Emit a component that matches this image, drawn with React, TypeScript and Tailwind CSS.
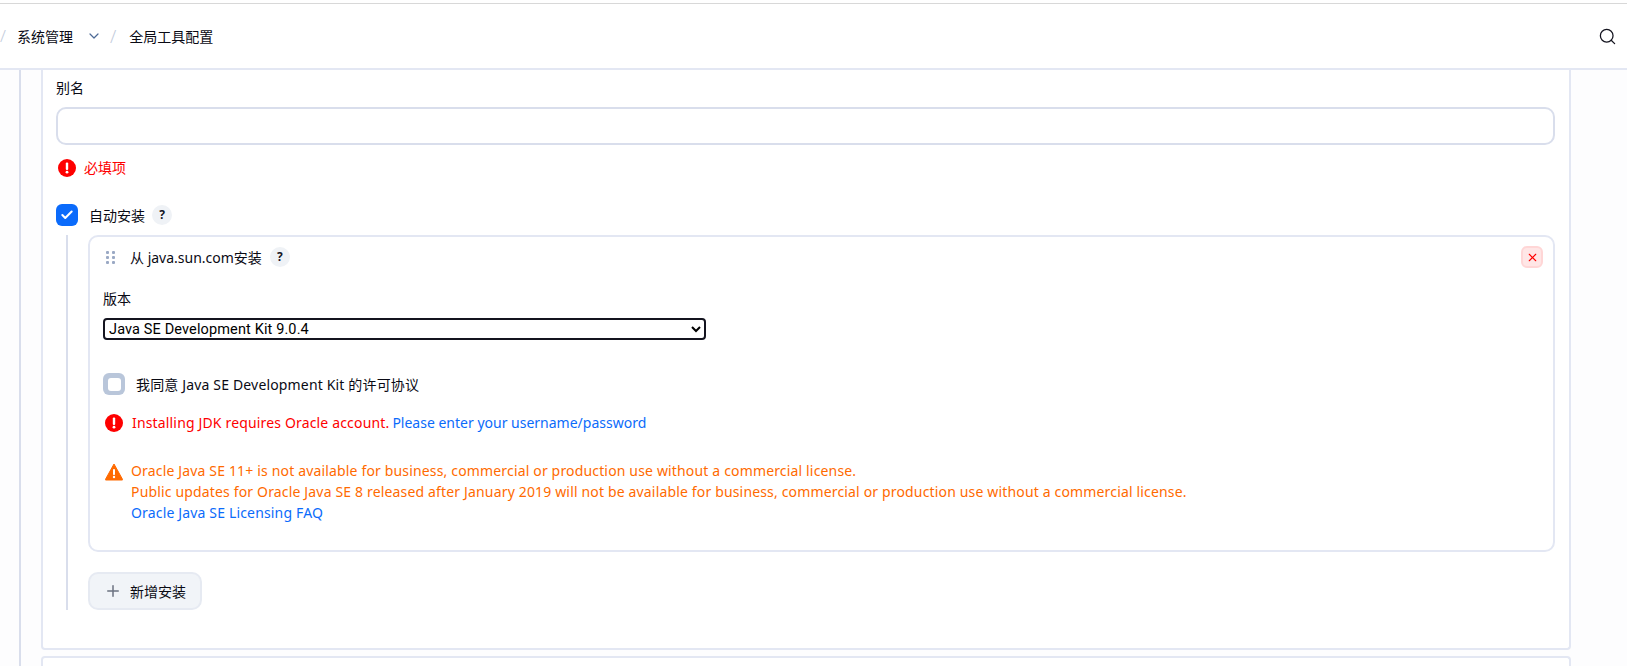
import { ChevronDown, Plus, Search, X, Check } from "lucide-react";

const font = "font-['Noto_Sans','Noto_Sans_CJK_SC',sans-serif]";

function ErrorIcon() {
  return (
    <svg viewBox="0 0 18 18" className="h-[18px] w-[18px] shrink-0">
      <circle cx="9" cy="9" r="9" fill="#fe0000" />
      <rect x="7.8" y="3.5" width="2.4" height="7.5" rx="1" fill="#fff" />
      <circle cx="9" cy="13.2" r="1.4" fill="#fff" />
    </svg>
  );
}

function WarningIcon() {
  return (
    <svg viewBox="0 0 18 18" className="h-[18px] w-[18px] shrink-0">
      <path d="M9 1 L17.6 16.5 Q17.8 17 17.2 17 L0.8 17 Q0.2 17 0.4 16.5 Z" fill="#ff6a00" stroke="#ff6a00" strokeLinejoin="round" />
      <rect x="8" y="6" width="2" height="6" rx="0.8" fill="#fff" />
      <circle cx="9" cy="14" r="1.2" fill="#fff" />
    </svg>
  );
}

function HelpBadge() {
  return (
    <span className="flex h-5 w-5 items-center justify-center rounded-full bg-[#eff2f6] text-[12px] font-bold text-[#14141f]">?</span>
  );
}

function DragHandle() {
  return (
    <svg viewBox="0 0 9 13" className="h-[13px] w-[9px]" fill="#9aa9c4">
      <rect x="0" y="0" width="3" height="3" rx="1" />
      <rect x="6" y="0" width="3" height="3" rx="1" />
      <rect x="0" y="5" width="3" height="3" rx="1" />
      <rect x="6" y="5" width="3" height="3" rx="1" />
      <rect x="0" y="10" width="3" height="3" rx="1" />
      <rect x="6" y="10" width="3" height="3" rx="1" />
    </svg>
  );
}

export default function App() {
  return (
    <div className={`flex h-[666px] w-[1627px] flex-col overflow-hidden bg-[#fdfdfe] text-[14px] text-[#0a0a14] ${font}`}>
      <div className="h-[3px] shrink-0 bg-white" />
      <div className="h-px shrink-0 bg-[#d8d8d8]" />
      <header className="flex h-[66px] shrink-0 items-center border-b-2 border-[#e3e7f3] bg-white pr-[10px]">
        <span className="w-[17px] text-[17px] font-light text-[#c3ccdc]">/</span>
        <span>系统管理</span>
        <ChevronDown className="ml-[13px] h-[16px] w-[16px] text-[#4d6a96]" strokeWidth={1.8} />
        <span className="ml-[8px] text-[18px] font-light text-[#c3ccdc]">/</span>
        <span className="ml-[13px]">全局工具配置</span>
        <Search className="ml-auto h-[19px] w-[19px] text-[#14141f]" strokeWidth={1.6} />
      </header>

      <main className="ml-[19px] min-h-0 flex-1 border-l-2 border-[#d9deec] pl-[20px]">
        <section className="h-[580px] w-[1530px] rounded-b-[4px] border-2 border-t-0 border-[#e3e7f3] bg-white pt-[9px] pl-[13px] pr-[14px]">
          <div className="leading-[18px]">别名</div>
          <input className="mt-[10px] block h-[38px] w-full rounded-[10px] border-2 border-[#d9deec] bg-white" />
          <div className="mt-[12px] flex items-center pl-[2px] text-[#fe0000]">
            <ErrorIcon />
            <span className="ml-[8px]">必填项</span>
          </div>

          <div className="mt-[26px] flex items-center">
            <span className="flex h-[22px] w-[22px] items-center justify-center rounded-[6px] bg-[#0b6bfb] text-white">
              <Check className="h-[14px] w-[14px]" strokeWidth={3.5} />
            </span>
            <span className="ml-[11px]">自动安装</span>
            <span className="ml-[7px]"><HelpBadge /></span>
          </div>

          <div className="mt-[9px] ml-[10px] border-l-2 border-[#d9deec] pl-[20px]">
            <div className="h-[317px] rounded-[10px] border-2 border-[#e3e7f3] bg-white pl-[13px] pr-[10px]">
              <div className="mt-[9px] flex h-[22px] items-center">
                <span className="ml-[3px]"><DragHandle /></span>
                <span className="ml-[15px]">从 java.sun.com安装</span>
                <span className="ml-[8px]"><HelpBadge /></span>
                <button className="ml-auto flex h-[22px] w-[22px] items-center justify-center rounded-[6px] border-2 border-[#ffd6d6] bg-[#ffe6e6] text-[#fe0000]">
                  <X className="h-[13px] w-[13px]" strokeWidth={2} />
                </button>
              </div>
              <div className="mt-[22px] leading-[18px]">版本</div>
              <select className="mt-[10px] block h-[22px] w-[603px] rounded-[4px] border-2 border-[#14141f] bg-white font-['Roboto',sans-serif] text-[14.5px] tracking-[0.13px] text-black">
                <option>Java SE Development Kit 9.0.4</option>
              </select>
              <div className="mt-[33px] flex items-center">
                <span className="flex h-[22px] w-[22px] items-center justify-center rounded-[6px] bg-[#b9c6da]">
                  <span className="h-[13px] w-[13px] rounded-[3px] bg-white" />
                </span>
                <span className="ml-[11px] tracking-[0.16px]">我同意 Java SE Development Kit 的许可协议</span>
              </div>
              <div className="mt-[18px] flex items-center pl-[2px] leading-[20px]">
                <ErrorIcon />
                <span className="ml-[9px] tracking-[0.16px] text-[#fe0000]">Installing JDK requires Oracle account.</span>
                <a className="ml-[3px] text-[#0b6bfb]">Please enter your username/password</a>
              </div>
              <div className="mt-[28px] flex pl-[2px] leading-[20.8px] tracking-[0.16px] text-[#ff6a00]">
                <span className="pt-[2px]"><WarningIcon /></span>
                <div className="ml-[8px]">
                  <div>Oracle Java SE 11+ is not available for business, commercial or production use without a commercial license.</div>
                  <div>Public updates for Oracle Java SE 8 released after January 2019 will not be available for business, commercial or production use without a commercial license.</div>
                  <a className="text-[#0b6bfb]">Oracle Java SE Licensing FAQ</a>
                </div>
              </div>
            </div>
            <button className="mt-[20px] flex h-[38px] w-[114px] items-center rounded-[10px] border-2 border-[#e6eaf2] bg-[#f1f4f8] pl-[14px]">
              <Plus className="h-[18px] w-[18px] text-[#6b7280]" strokeWidth={2} />
              <span className="ml-[8px]">新增安装</span>
            </button>
          </div>
        </section>
        <div className="mt-[6px] h-[20px] w-[1530px] rounded-t-[4px] border-2 border-b-0 border-[#e3e7f3] bg-white" />
      </main>
    </div>
  );
}
